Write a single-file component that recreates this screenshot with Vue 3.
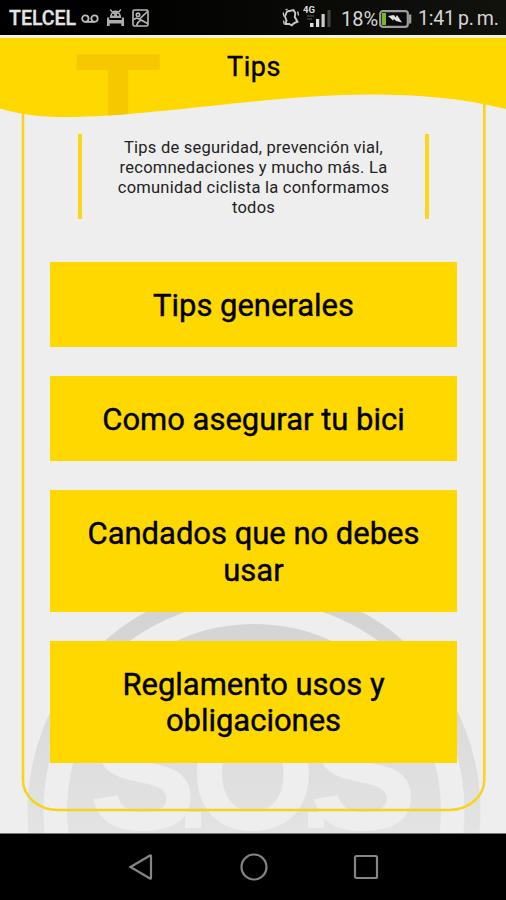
<script setup>
const tips = [
  ['Tips generales'],
  ['Como asegurar tu bici'],
  ['Candados que no debes', 'usar'],
  ['Reglamento usos y', 'obligaciones'],
]
const intro = [
  'Tips de seguridad, prevención vial,',
  'recomnedaciones y mucho más. La',
  'comunidad ciclista la conformamos',
  'todos',
]
</script>

<template>
  <div class="phone">
    <header class="status">
      <span class="carrier">TELCEL</span>
      <svg class="i-voice" width="18" height="10" viewBox="0 0 18 10">
        <g fill="none" stroke="#bdbdbd" stroke-width="1.8">
          <circle cx="4.3" cy="4.6" r="3.2" /><circle cx="13.5" cy="4.6" r="3.2" /><path d="M4.3 7.9h9.2" />
        </g>
      </svg>
      <svg class="i-droid" width="19" height="18" viewBox="0 0 19 18">
        <path d="M4.200 0.500l2 2.400Q9.500 1.500 12.800 2.900l2-2.400" fill="none" stroke="#b4b4b4" stroke-width="1.400" />
        <path d="M3.800 9C3.800 4.500 6 2.400 9.500 2.400S15.200 4.500 15.200 9z" fill="#a8a8a8" />
        <path d="M6.200 5h1.900v1.700H6.200zM11 5h1.900v1.700H11z" fill="#080808" />
        <path d="M1 8.500h2.200V11h12.600V8.500H18V17h-2.700v-2.500H3.700V17H1z" fill="#acacac" />
      </svg>
      <svg class="i-pic" width="17" height="18" viewBox="0 0 17 18">
        <g fill="none" stroke="#b8b8b8" stroke-width="1.6">
          <rect x="1" y="1" width="15" height="16" rx="1.500" />
          <circle cx="6" cy="5.800" r="1.700" />
          <path d="M1.500 10.500l3-1.500 3 1 8-7.500M4.500 16.500c1-3 2.500-4.500 4.500-5.500l6.500 3.500" />
        </g>
      </svg>
      <span class="spacer"></span>
      <svg class="i-vib" width="18" height="20" viewBox="0 0 18 20">
        <g fill="none" stroke="#c8c8c8" stroke-width="1.900">
          <path d="M5 3.500l6.500-1.500 1.800 3-.5 4 2.700 4.700-3.300 1.300-2.500 2.300-2.500-1.300L3.500 16l1-3.500-1.500-4z" />
          <path d="M1.200 4.500l.8 4M3.500 2l2-1M16.500 7.500l-.8-4M1.500 12.500l.7 3.500" stroke-width="1.300" />
        </g>
      </svg>
      <svg class="i-signal" width="29" height="24" viewBox="0 0 29 24">
        <text x="0" y="9" class="net">4G</text>
        <path d="M4 12h7M4 15h5" stroke="#333" stroke-width="2" />
        <path d="M7 19h3.500v4H7z" fill="#ddd" />
        <path d="M13 15h3.200v8H13z" fill="#ddd" />
        <path d="M18.500 10h3.200v13h-3.200z" fill="#ccc" />
        <path d="M24.500 6h3v17h-3z" fill="#444" />
      </svg>
      <span class="percent">18%</span>
      <svg class="i-batt" width="33" height="18" viewBox="0 0 33 18">
        <rect x="1.200" y="1.200" width="27.600" height="15.600" rx="2.500" fill="#080808" stroke="#9c9c9c" stroke-width="2.200" />
        <path d="M3 3h4v12H3z" fill="#75b82a" />
        <path d="M30 4.500h2.300v9H30z" fill="#9c9c9c" />
        <path d="M9 6l6-1 1.500 2.500L18 5l5 7.500-6-1.500-2-2-1 1.500z" fill="#e0e0e0" />
      </svg>
      <span class="clock">1:41 p. m.</span>
    </header>

    <main class="screen">
      <svg class="backdrop" width="506" height="798" viewBox="0 35 506 798">
        <defs>
          <linearGradient id="fade" gradientUnits="userSpaceOnUse" x1="0" y1="590" x2="0" y2="833">
            <stop offset="0" stop-color="#d2d2d2" />
            <stop offset="1" stop-color="#e3e3e3" />
          </linearGradient>
          <clipPath id="wave">
            <path d="M0 38H506V109C460 98 420 94.500 370 94.500C270 94.500 150 117 65 117C42 117 18 114.500 0 108.500Z" />
          </clipPath>
        </defs>
        <circle cx="254" cy="811" r="218.500" fill="none" stroke="url(#fade)" stroke-width="16" />
        <circle cx="254" cy="811" r="187" fill="url(#fade)" />
        <g class="sos">
          <text x="143" y="828">S</text>
          <text x="253" y="828">O</text>
          <text x="363.500" y="828">S</text>
        </g>
        <path d="M185 812h16v16h-16zM308 812h16v16h-16z" fill="#eee" />
        <path d="M23 100V780a35 30 0 0 0 35 30H449a35 30 0 0 0 35.300-30V100" fill="none" stroke="#f8d21c" stroke-width="2.500" />
        <rect y="35" width="506" height="3" fill="#f7f0dc" />
        <g clip-path="url(#wave)">
          <rect y="38" width="506" height="90" fill="#ffd800" />
          <text x="118" y="151" class="initial">T</text>
        </g>
      </svg>

      <div class="content">
        <h1 class="title">Tips</h1>
        <p class="intro">
          <span v-for="line in intro" :key="line">{{ line }}</span>
        </p>
        <nav class="list">
          <button v-for="tip in tips" :key="tip[0]" class="tip">
            <span v-for="line in tip" :key="line">{{ line }}</span>
          </button>
        </nav>
      </div>
    </main>

    <footer class="navbar">
      <svg width="26" height="28" viewBox="0 0 26 28"><path d="M2.500 14L22 2.500q1-.5 1 .8v21.400q0 1.300-1 .8z" /></svg>
      <svg width="28" height="28" viewBox="0 0 28 28"><circle cx="14" cy="14" r="12.500" /></svg>
      <svg width="26" height="26" viewBox="0 0 26 26"><rect x="2" y="2" width="22" height="22" rx="1.500" /></svg>
    </footer>
  </div>
</template>

<style>
body { background: #000; }
</style>

<style scoped>
.phone {
  width: 506px;
  height: 900px;
  display: flex;
  flex-direction: column;
  overflow: hidden;
  font-family: Roboto, "Liberation Sans", sans-serif;
}
.status {
  height: 35px;
  flex: none;
  display: flex;
  align-items: center;
  box-sizing: border-box;
  padding: 2px 8px 0 9px;
  background: linear-gradient(90deg, #000 20%, #12120d);
  color: #d6d6d6;
  font-size: 20px;
  white-space: nowrap;
}
.carrier { font-size: 19.500px; font-weight: 500; color: #e4e4e4; width: 72px; -webkit-text-stroke: 0.300px #e4e4e4; }
.status svg { flex: none; }
.i-droid { margin-left: 7px; margin-top: -2px; }
.i-pic { margin-left: 7px; margin-top: -1px; }
.i-vib { margin-top: -2px; }
.spacer { flex: 1; }
.i-signal { margin: -5px 0 0 3px; }
.net { font: bold 9.500px Roboto, sans-serif; fill: #ddd; }
.percent { margin-left: 9px; width: 37px; }
.i-batt { margin-left: 1px; }
.clock { margin-left: 6px; width: 80px; font-size: 19.500px; letter-spacing: -0.200px; word-spacing: -1.500px; }
.screen {
  height: 798px;
  flex: none;
  display: grid;
  background: #eee;
}
.backdrop, .content { grid-area: 1 / 1; }
.backdrop { display: block; }
.sos { font: bold 158px "Liberation Sans", sans-serif; fill: #eee; stroke: #eee; stroke-width: 2px; text-anchor: middle; }
.initial { font: bold 141px "Liberation Sans", sans-serif; fill: #f5c800; text-anchor: middle; }
.content {
  position: relative;
  display: flex;
  flex-direction: column;
  align-items: center;
  color: #000;
}
.title {
  margin: 14px 0 0 2px;
  font-size: 27px;
  line-height: 36px;
  font-weight: 400;
  letter-spacing: 0.500px;
  -webkit-text-stroke: 0.400px #000;
}
.intro {
  margin: 49px 0 0;
  width: 351px;
  height: 85px;
  box-sizing: border-box;
  padding: 4px 0 0 1px;
  border: solid #fad61d;
  border-width: 0 4px;
  display: flex;
  flex-direction: column;
  align-items: center;
  font-size: 16.500px;
  line-height: 20px;
  letter-spacing: 0.240px;
  color: #222;
}
.list {
  margin: 42.500px 0 0 1px;
  width: 407.500px;
  display: flex;
  flex-direction: column;
  gap: 28.800px;
}
.tip {
  border: 0;
  margin: 0;
  padding: 26.200px 0 23.200px;
  background: #ffd800;
  color: #000;
  display: flex;
  flex-direction: column;
  align-items: center;
  font: 400 31px/36.200px Roboto, "Liberation Sans", sans-serif;
  letter-spacing: -0.020px;
  -webkit-text-stroke: 0.400px #000;
}
.navbar {
  flex: 1;
  box-sizing: border-box;
  display: flex;
  align-items: center;
  justify-content: space-between;
  padding: 0 127px 0 128px;
  border-top: 1px solid #777;
  background: #000;
}
.navbar svg { fill: none; stroke: #858585; stroke-width: 2.200; }
</style>
